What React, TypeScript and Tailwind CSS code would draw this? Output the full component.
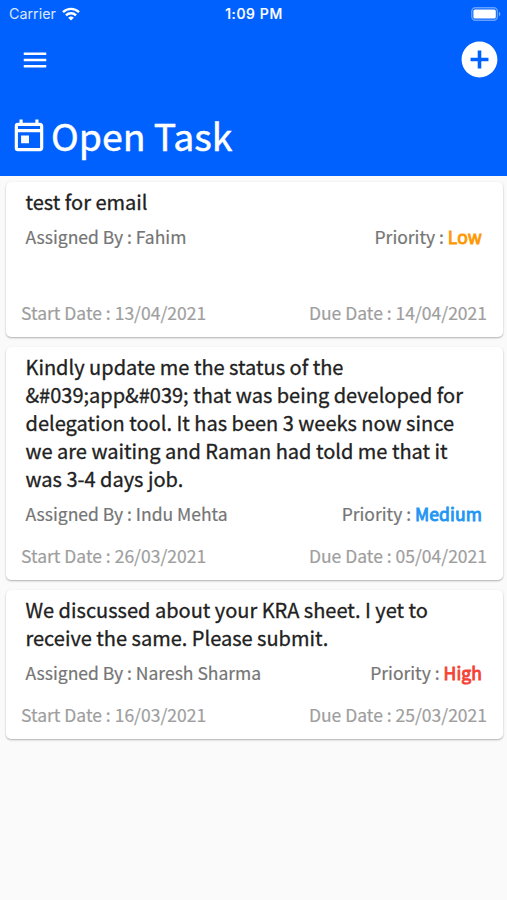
import { MdAddCircle, MdMenu, MdOutlineToday } from 'react-icons/md'
import clsx from 'clsx'

type Priority = 'Low' | 'Medium' | 'High'

type Task = {
  title: string
  assignedBy: string
  priority: Priority
  startDate: string
  dueDate: string
  tall?: boolean
}

const TASKS: Task[] = [
  {
    title: 'test for email',
    assignedBy: 'Fahim',
    priority: 'Low',
    startDate: '13/04/2021',
    dueDate: '14/04/2021',
    tall: true,
  },
  {
    title:
      'Kindly update me the status of the &#039;app&#039; that was being developed for delegation tool. It has been 3 weeks now since we are waiting and Raman had told me that it was 3-4 days job.',
    assignedBy: 'Indu Mehta',
    priority: 'Medium',
    startDate: '26/03/2021',
    dueDate: '05/04/2021',
  },
  {
    title: 'We discussed about your KRA sheet. I yet to receive the same. Please submit.',
    assignedBy: 'Naresh Sharma',
    priority: 'High',
    startDate: '16/03/2021',
    dueDate: '25/03/2021',
  },
]

const PRIORITY_COLORS: Record<Priority, string> = {
  Low: 'text-[#ff9800]',
  Medium: 'text-[#2196f3]',
  High: 'text-[#f44336]',
}

function StatusBar() {
  return (
    <div className="grid h-[27px] grid-cols-3 items-center pl-[9px] pr-[6px] font-['Inter',sans-serif] text-[14.3px] text-white">
      <div className="flex items-center gap-[6px]">
        <span className="opacity-85">Carrier</span>
        <svg width="18" height="14" viewBox="0 0 18 14" fill="none" stroke="white" strokeWidth="2.4">
          <path d="M1 5.2a11.4 11.4 0 0 1 16 0" />
          <path d="M4 8.3a7.1 7.1 0 0 1 10 0" />
          <path d="M9 13.6 6.2 10.8a4 4 0 0 1 5.6 0Z" fill="white" stroke="none" />
        </svg>
      </div>
      <span className="pr-[2px] text-center text-[14px] font-medium tracking-[0.6px] [-webkit-text-stroke:0.2px]">1:09 PM</span>
      <svg className="justify-self-end" width="30" height="14" viewBox="0 0 30 14">
        <rect x="0.8" y="0.8" width="25.6" height="12.4" rx="3.6" fill="none" stroke="white" strokeOpacity="0.4" strokeWidth="1.4" />
        <rect x="2.4" y="2.4" width="22.4" height="9.2" rx="1.6" fill="white" />
        <path d="M28 4.8c1.8.8 1.8 3.6 0 4.4Z" fill="white" fillOpacity="0.5" />
      </svg>
    </div>
  )
}

function TaskCard({ task }: { task: Task }) {
  return (
    <article className="rounded-[5px] bg-white px-[15.5px] pt-[6px] pb-[12px] shadow-[0_1px_2px_rgba(0,0,0,0.3)]">
      <div className={clsx('pr-[5px] pb-px pl-[4.5px]', task.tall && 'min-h-[96px]')}>
        <h2 className="text-[20px] leading-[28px] text-[#212121] [-webkit-text-stroke:0.3px]">{task.title}</h2>
        <div className="mt-[9px] flex justify-between text-[17.5px] leading-[24px] text-[#757575] [-webkit-text-stroke:0.2px]">
          <span>Assigned By : {task.assignedBy}</span>
          <span>
            Priority :{' '}
            <span className={clsx('tracking-[0.1px] [-webkit-text-stroke:0.9px]', PRIORITY_COLORS[task.priority])}>
              {task.priority}
            </span>
          </span>
        </div>
      </div>
      <div className="mt-[17px] flex justify-between text-[17.5px] leading-[24px] text-[#9e9e9e] [-webkit-text-stroke:0.2px]">
        <span>Start Date : {task.startDate}</span>
        <span>Due Date : {task.dueDate}</span>
      </div>
    </article>
  )
}

export default function App() {
  return (
    <div className="h-[900px] w-[507px] overflow-hidden bg-[#fafafa] font-['Noto_Sans_CJK_SC',sans-serif]">
      <header className="h-[175.5px] bg-[#0061ff] text-white">
        <StatusBar />
        <div className="flex h-[65px] items-center justify-between pl-5 pr-[6px]">
          <button aria-label="Menu">
            <MdMenu size={30} />
          </button>
          <button aria-label="Add task">
            <MdAddCircle size={43} />
          </button>
        </div>
        <div className="flex h-[89px] items-center gap-[3px] pl-[10px]">
          <MdOutlineToday size={38} />
          <h1 className="pb-[3px] text-[37.4px] leading-[50px] [-webkit-text-stroke:0.5px]">Open Task</h1>
        </div>
      </header>
      <main className="flex flex-col gap-[10px] pt-[6px] pr-[4.5px] pl-[5.5px]">
        {TASKS.map(task => (
          <TaskCard key={task.startDate} task={task} />
        ))}
      </main>
    </div>
  )
}
